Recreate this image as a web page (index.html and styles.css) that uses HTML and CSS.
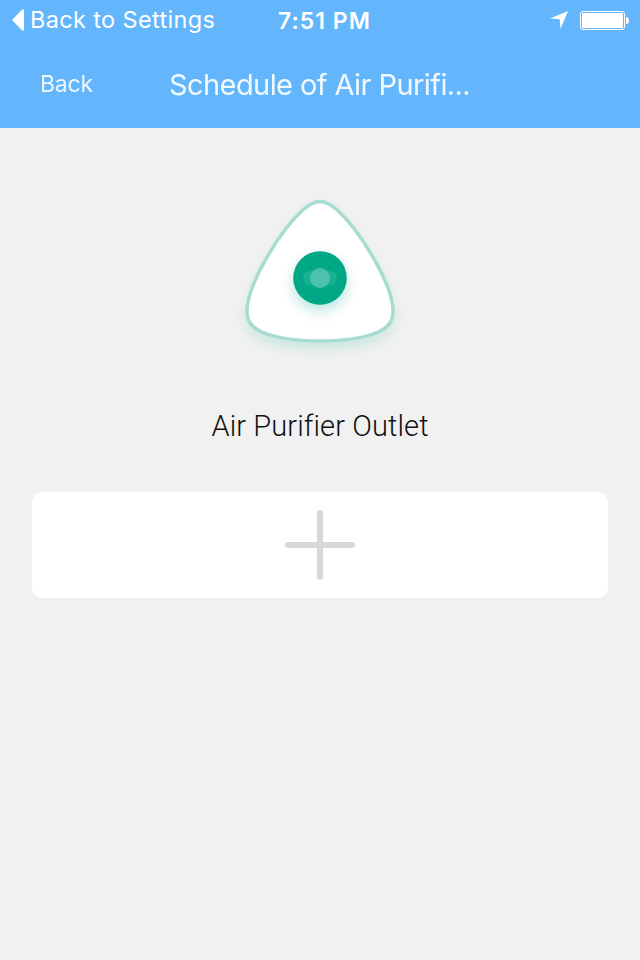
FILE: index.html
```
<!DOCTYPE html>
<html lang="en">

<head>
    <meta charset="utf-8">
    <title>Schedule of Air Purifier</title>
    <link rel="stylesheet" href="styles.css">
</head>

<body>
    <header class="header">
        <div class="status-bar">
            <a class="return-link" href="#">
                <svg width="12" height="22" viewBox="0 0 12 22">
                    <path d="M.7 10.2 10 .8Q12-.8 12 2V20Q12 22.800 10 21.200L.7 11.800Q0 11 .7 10.200Z" fill="#fff"/>
                </svg>
                <span>Back to Settings</span>
            </a>
            <div class="time">7:51 PM</div>
            <div class="status-icons">
                <svg width="18" height="18" viewBox="0 0 18 18">
                    <path d="M18 0 10.500 18 9.700 8.300 0 7.500Z" fill="#fff"/>
                </svg>
                <svg width="49" height="19" viewBox="0 0 49 19">
                    <rect x=".5" y=".5" width="44" height="18" rx="2.500" fill="none" stroke="#fff"/>
                    <rect x="2" y="2" width="41" height="15" rx="1" fill="#fff"/>
                    <path d="M46 6Q49 6 49 9.500T46 13Z" fill="#fff"/>
                </svg>
            </div>
        </div>
        <nav class="nav-bar">
            <a class="back" href="#">Back</a>
            <h1 class="title">Schedule of Air Purifi...</h1>
        </nav>
    </header>

    <main class="content">
        <svg class="device" width="200" height="190" viewBox="0 0 200 190">
            <defs>
                <filter id="blur" x="-50%" y="-50%" width="200%" height="200%">
                    <feGaussianBlur stdDeviation="7"/>
                </filter>
                <path id="shell" d="M100 21.500C94 21.500 90 24 84 29C60 50 27 105 27 131C27 141 31 147 42 152C56 158 78 161 100 161S144 158 158 152C169 147 173 141 173 131C173 105 140 50 116 29C110 24 106 21.500 100 21.500Z"/>
            </defs>
            <use href="#shell" y="7" fill="#00a886" opacity=".18" filter="url(#blur)"/>
            <use href="#shell" fill="#fff" stroke="#a8dcd0" stroke-width="3.500"/>
            <circle cx="100" cy="104" r="27" fill="#00a886" opacity=".28" filter="url(#blur)"/>
            <circle cx="100" cy="98" r="26.800" fill="#00a886"/>
            <rect x="83" y="91" width="34" height="14" rx="7" fill="#1ab093"/>
            <circle cx="100" cy="98" r="10" fill="#4dc2aa"/>
        </svg>
        <h2 class="device-name">Air Purifier Outlet</h2>
        <button class="add" aria-label="Add schedule">
            <svg width="70" height="70" viewBox="0 0 70 70">
                <path d="M35 3V67M3 35H67" fill="none" stroke="#d8d8d8" stroke-width="6" stroke-linecap="round"/>
            </svg>
        </button>
    </main>
</body>

</html>
```

FILE: styles.css
```
* { box-sizing: border-box; }
body { margin: 0; background: #f1f1f1; font-family: Inter, "Liberation Sans", sans-serif; }
a { color: #fff; text-decoration: none; }
svg { display: block; flex: none; }

.header { height: 128px; background: #63b6fc; color: #fff; }
.status-bar { display: grid; grid-template-columns: 1fr auto 1fr; height: 40px; padding: 0 11px 0 12px; align-items: center; white-space: nowrap; }
.return-link { display: flex; align-items: center; gap: 6px; font-size: 23.5px; letter-spacing: 0.35px; }
.return-link span { padding-bottom: 2px; }
.time { padding: 2px 0 0 8px; font-size: 23px; font-weight: 600; letter-spacing: 1px; }
.status-icons { display: flex; justify-content: flex-end; align-items: center; gap: 12px; }

.nav-bar { display: grid; grid-template-columns: 129px 1fr; height: 88px; padding-left: 40px; align-items: center; }
.back { font-size: 23px; font-weight: 400; letter-spacing: -0.2px; opacity: 0.9; }
.title { margin: 0; font-size: 29px; font-weight: 400; letter-spacing: -0.58px; opacity: 0.92; }

.content { display: flex; flex-direction: column; align-items: center; padding: 52px 32px 0; }
.device { overflow: visible; }
.device-name { margin: 36px 0 46px; font-family: Roboto, sans-serif; font-size: 29px; line-height: 40px; font-weight: 300; letter-spacing: 0.1px; font-variant-ligatures: none; color: #111; }
.add { display: flex; justify-content: center; align-items: center; width: 100%; height: 106px; padding: 0; border: 0; border-radius: 10px; background: #fff; }
```
